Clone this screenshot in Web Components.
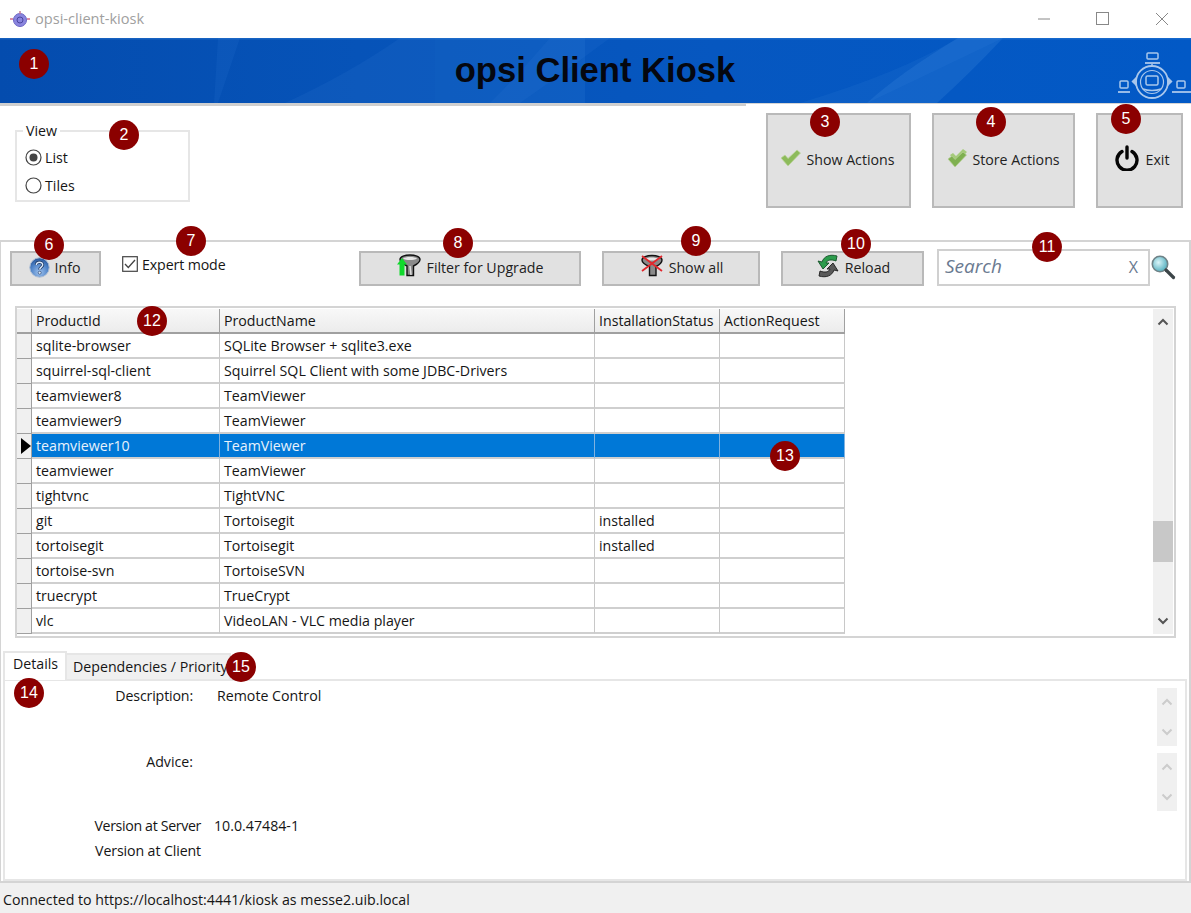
<!DOCTYPE html>
<html><head><meta charset="utf-8"><style>
html,body{margin:0;padding:0;background:#fff}
body{font:14.2px "Open Sans","Noto Sans",sans-serif;color:#151515;width:1191px;height:913px;overflow:hidden;position:relative}
</style></head><body>
<kiosk-app></kiosk-app>
<script>
const ICONS={
check:`<svg width="21" height="19" viewBox="0 0 21 19"><path d="M1 10l4-3 3 3.500L17 2l3.500 3L8 18z" fill="#8dbb5b" stroke="#bcd49c" stroke-width=".8"/></svg>`,
check2:`<svg width="21" height="21" viewBox="0 0 21 21"><path d="M3 8l3-2 3 3 7-7 4 3-11 11z" fill="#a5cb7a"/><path d="M1 12l4-3 3 3.500L16 5l3.500 3L8 20z" fill="#7fb050" stroke="#b6cf95" stroke-width=".7"/></svg>`,
power:`<svg width="26" height="26" viewBox="0 0 26 26"><path d="M8 6.500A10 10 0 1 0 18 6.500" fill="none" stroke="#050505" stroke-width="3.400" stroke-linecap="round"/><path d="M13 2v11" stroke="#050505" stroke-width="3.400" stroke-linecap="round"/></svg>`,
info:`<svg width="21" height="21" viewBox="0 0 21 21" style="position:relative;top:2px"><defs><radialGradient id="q" cx=".5" cy=".75" r=".8"><stop offset="0" stop-color="#9fc2ee"/><stop offset=".6" stop-color="#4a7fc4"/><stop offset="1" stop-color="#1f4a8c"/></radialGradient></defs><circle cx="10.500" cy="10.500" r="9.700" fill="url(#q)" stroke="#a8bbd4"/><path d="M7.300 8c0-3.800 6.600-3.800 6.400 0-.2 2-3 2.300-3 4.500" fill="none" stroke="#16335f" stroke-width="3"/><path d="M7.300 8c0-3.800 6.600-3.800 6.400 0-.2 2-3 2.300-3 4.500" fill="none" stroke="#dbe8f8" stroke-width="1.500"/><circle cx="10.700" cy="15.700" r="1.500" fill="#dbe8f8" stroke="#16335f" stroke-width=".6"/></svg>`,
filterUp:`<svg width="24" height="24" viewBox="0 0 24 24"><path d="M3 5.500C3 2.500 8 1 13 1s10 1.500 10 4.500c0 3-4.500 5.500-6.500 6.500v9.500h-6.500V12C8 11 3 8.500 3 5.500z" fill="#8a8a8a" stroke="#111" stroke-width="1.400"/><path d="M6 4.500c2-2 12-2 14 0-3 2-11 2-14 0z" fill="#e6e6e6"/><path d="M13 12l1 9" stroke="#dedede" stroke-width="1.500"/><path d="M5 4l5 6.500H7.500V21.500H2.500V10.500H0z" fill="#10d92c"/></svg>`,
filterX:`<svg width="24" height="24" viewBox="0 0 24 24"><path d="M2 6c0-3 5-4.500 10-4.500S22 3 22 6c0 3-4 5.500-6 6.500v9H9.500v-9C7 11.500 2 9 2 6z" fill="#8a8a8a" stroke="#111" stroke-width="1.400"/><path d="M5 5c2-2 11-2 14 0-3 2-11 2-14 0z" fill="#e6e6e6"/><path d="M2 2l20 15M22 2L2 17" stroke="#e2262c" stroke-width="1.800"/></svg>`,
reload:`<svg width="26" height="26" viewBox="0 0 26 26"><path d="M22 3C15 1 9 3 7 9L3 8l5 8 6-6h-3c1-3 5-4 10-2z" fill="#2c9c4c" stroke="#134f27" stroke-width=".9"/><path d="M4 23c7 2 13 0 15-6l4 1-5-8-6 6h3c-1 3-5 4-10 2z" fill="#5a5a5a" stroke="#1d1d1d" stroke-width=".9"/></svg>`,
mag:`<svg width="26" height="26" viewBox="0 0 26 26"><defs><radialGradient id="m" cx=".4" cy=".4" r=".7"><stop offset="0" stop-color="#d9f4f8"/><stop offset="1" stop-color="#43a7b8"/></radialGradient></defs><circle cx="10" cy="10" r="7.700" fill="url(#m)" stroke="#6f8287" stroke-width="1.600"/><path d="M16 16l7.500 7.500" stroke="#3c4548" stroke-width="3.200" stroke-linecap="round"/></svg>`,
app:`<svg width="20" height="18" viewBox="0 0 20 18"><circle cx="10" cy="10" r="6.500" fill="#8a85de" stroke="#6a65c5"/><circle cx="10" cy="10" r="3" fill="none" stroke="#4a459f"/><path d="M10 1v3" stroke="#c47a98" stroke-width="1.500"/><path d="M0 9h3M17 9h3" stroke="#dd8fa8" stroke-width="2"/></svg>`,
logo:`<svg width="81" height="66" viewBox="0 0 81 66" fill="none" stroke="#a9c7ec" stroke-width="1.500"><circle cx="42" cy="42" r="16" stroke-width="1.800"/><circle cx="42" cy="42" r="11.500" stroke-width="1.200"/><rect x="36" y="36" width="12" height="9" rx="1.500"/><path d="M33 49c5 2 13 2 18 0"/><rect x="37" y="13" width="11" height="6" rx="1"/><path d="M35 23h15" stroke-width="1.800"/><path d="M42 24v2"/><rect x="10" y="41" width="8" height="7" rx="1"/><path d="M8 52h12" stroke-width="1.800"/><rect x="67" y="41" width="8" height="7" rx="1"/><path d="M62 52h19" stroke-width="1.800"/><path d="M26 38l-3.500 3.500 3.500 3.500z" fill="#a9c7ec"/><path d="M58 38l3.500 3.500-3.500 3.500z" fill="#a9c7ec"/></svg>`,
radioOn:`<svg width="17" height="17" viewBox="0 0 17 17"><circle cx="8.500" cy="8.500" r="7.500" fill="#fff" stroke="#444" stroke-width="1.200"/><circle cx="8.500" cy="8.500" r="4" fill="#444"/></svg>`,
radioOff:`<svg width="17" height="17" viewBox="0 0 17 17"><circle cx="8.500" cy="8.500" r="7.500" fill="#fff" stroke="#444" stroke-width="1.200"/></svg>`,
checkbox:`<svg width="16" height="16" viewBox="0 0 16 16"><rect x=".7" y=".7" width="14.600" height="14.600" fill="#fff" stroke="#444" stroke-width="1.200"/><path d="M3 8l3.300 3.500L13 4" fill="none" stroke="#444" stroke-width="1.300"/></svg>`,
up:c=>`<svg width="12" height="8" viewBox="0 0 12 8"><path d="M1.500 6.500L6 2l4.500 4.500" fill="none" stroke="${c}" stroke-width="2"/></svg>`,
down:c=>`<svg width="12" height="8" viewBox="0 0 12 8"><path d="M1.500 1.500L6 6l4.500-4.500" fill="none" stroke="${c}" stroke-width="2"/></svg>`
};
function def(name,css,html){
  customElements.define(name,class extends HTMLElement{
    constructor(){super();this.attachShadow({mode:'open'});}
    connectedCallback(){
      this.shadowRoot.innerHTML=`<style>${css}</style>`+(typeof html==='function'?html():html);
    }
  });
}
def('kiosk-badge',`:host{position:absolute;width:30px;height:30px;border-radius:50%;background:#8b0000;color:#fff;display:flex;align-items:center;justify-content:center;font:16px "Liberation Sans",sans-serif;z-index:5;transform:translate(-15px,-15px)}`,`<slot></slot>`);
def('kiosk-titlebar',`:host{display:flex;align-items:center;height:38px;padding-left:10px;font-size:14.6px;color:#a0a0a0;box-sizing:border-box}
 .t{margin-left:5px;flex:1;position:relative;top:-1px}.w{display:flex;height:38px}.b{width:59px;display:flex;align-items:center;justify-content:center}`,
 `${ICONS.app}<span class="t">opsi-client-kiosk</span><div class="w"><div class="b"><svg width="14" height="14"><path d="M1 7h12" stroke="#888" stroke-width="1"/></svg></div><div class="b"><svg width="14" height="14"><rect x=".5" y=".5" width="12" height="12" fill="none" stroke="#888"/></svg></div><div class="b"><svg width="14" height="14"><path d="M1 1l12 12M13 1L1 13" stroke="#888" stroke-width="1"/></svg></div></div>`);
def('kiosk-banner',`:host{display:flex;position:relative;height:65px;align-items:center;justify-content:center;background:linear-gradient(90deg,#044cae 0%,#0653b8 30%,#0657c0 60%,#0259c6 100%);overflow:hidden}
 .s{position:absolute;inset:0}.h{margin:0;font:bold 34.6px "Liberation Sans",sans-serif;color:#05070f;position:relative;left:-.5px}.l{position:absolute;right:0;top:2px;display:flex}`,
 `<svg class="s" width="1191" height="65"><path d="M218 0h22l-22 65h-4z" fill="#3a86dc" opacity=".12"/><path d="M285 65Q350 35 400 0h35v65z" fill="#3a86dc" opacity=".13"/><path d="M435 0h150v65H435z" fill="#3a86dc" opacity=".17"/><path d="M520 65Q570 30 610 0h-60Q520 35 490 65z" fill="#3a86dc" opacity=".12"/><path d="M867 65Q930 35 1003 0h-45Q900 35 800 65z" fill="#3a86dc" opacity=".14"/><path d="M937 65Q970 35 1003 0h-45Q900 35 867 65z" fill="#3a86dc" opacity=".28"/><path d="M0 0h1191v1.500H0z" fill="#3a86dc" opacity=".35"/></svg><h1 class="h">opsi Client Kiosk</h1><div class="l">${ICONS.logo}</div>`);
def('kiosk-button',`:host{display:flex;align-items:center;justify-content:center;gap:var(--g,3px);box-sizing:border-box;background:#e1e1e1;border:2px solid #b9b9b9;color:#222;height:var(--h,34px);width:var(--w,100px);flex:none;padding-bottom:2px;padding-right:var(--pr,0);padding-left:var(--pl,0)}
 .i{display:flex}`, `<span class="i"><slot name="i"></slot></span><slot></slot>`);
def('kiosk-view',`:host{display:block;position:relative;box-sizing:border-box;width:175px;height:72px;border:2px solid #e6e6e6;margin:27px 0 0 15px;padding:11px 0 0 8px;flex:none}
 .lg{position:absolute;left:6px;top:-10px;background:#fff;padding:0 3px;line-height:18px}.r{display:flex;align-items:center;gap:3px;height:28px}`,
 `<span class="lg">View</span><div class="r">${ICONS.radioOn}List</div><div class="r">${ICONS.radioOff}Tiles</div>`);
def('kiosk-head',`:host{display:flex;height:137px;box-sizing:border-box;position:relative}
 .line{position:absolute;left:0;top:0;width:746px;height:3px;background:#cfcfcf}.thin{position:absolute;left:0;right:0;top:0;height:1px;background:#d4d4d4}
 .bs{margin-left:auto;display:flex;gap:21px;padding:10px 8px 0 0;align-items:flex-start}`,
 `<div class="thin"></div><div class="line"></div><kiosk-view></kiosk-view><div class="bs">
 <kiosk-button style="--w:145px;--h:95px;--g:5px;--pr:2px"><span slot="i">${ICONS.check}</span>Show Actions</kiosk-button>
 <kiosk-button style="--w:143px;--h:95px;--g:4px"><span slot="i">${ICONS.check2}</span>Store Actions</kiosk-button>
 <kiosk-button style="--w:87px;--h:95px;--g:6px;--pl:4px"><span slot="i">${ICONS.power}</span>Exit</kiosk-button></div>`);
def('kiosk-toolbar',`:host{display:flex;align-items:flex-start;height:64px;box-sizing:border-box;padding:9px 0 0 9px}
 .c{display:flex;align-items:center;gap:4px;margin:1px 0 0 21px;width:237px;height:24px;flex:none;letter-spacing:-.12px}
 .sp{display:flex;gap:21px}
 .s{box-sizing:border-box;width:213px;height:37px;margin:-2px 0 0 13px;border:2px solid #d0d0d0;background:#fff;display:flex;align-items:center;justify-content:space-between;padding:0 10px 3px 6px;color:#6a7a90;font-style:italic;font-size:19px;flex:none}
 .x{font-style:normal;font-size:16px;margin-top:1px}.m{margin:3px 0 0 0;display:flex}`,
 `<kiosk-button style="--w:91px;--h:35px;--g:5px;--pr:2px"><span slot="i">${ICONS.info}</span>Info</kiosk-button>
 <div class="c">${ICONS.checkbox}Expert mode</div>
 <div class="sp"><kiosk-button style="--w:222px;--h:35px;--g:6px"><span slot="i">${ICONS.filterUp}</span>Filter for Upgrade</kiosk-button>
 <kiosk-button style="--w:158px;--h:35px;--g:5px;--pl:1px"><span slot="i">${ICONS.filterX}</span>Show all</kiosk-button>
 <kiosk-button style="--w:143px;--h:35px;--g:4px"><span slot="i">${ICONS.reload}</span>Reload</kiosk-button></div>
 <div class="s"><span>Search</span><span class="x">X</span></div><div class="m">${ICONS.mag}</div>`);
const ROWS=[["sqlite-browser","SQLite Browser + sqlite3.exe",""],["squirrel-sql-client","Squirrel SQL Client with some JDBC-Drivers",""],["teamviewer8","TeamViewer",""],["teamviewer9","TeamViewer",""],["teamviewer10","TeamViewer","",1],["teamviewer","TeamViewer",""],["tightvnc","TightVNC",""],["git","Tortoisegit","installed"],["tortoisegit","Tortoisegit","installed"],["tortoise-svn","TortoiseSVN",""],["truecrypt","TrueCrypt",""],["vlc","VideoLAN - VLC media player",""]];
def('kiosk-table',`:host{display:flex;box-sizing:border-box;margin:0 13px 0 14px;height:332px;border:2px solid #d4d4d4;padding:1px 1px 0 0}
 .g{display:grid;grid-template-columns:15px 188px 375px 125px 125px;grid-auto-rows:25px;align-content:start;width:828px;flex:none}
 .c{box-sizing:border-box;border-right:1px solid #c8c8c8;border-bottom:2px solid #cfcfcf;padding:0 4px;line-height:23px;white-space:nowrap;overflow:hidden;height:25px}
 .h{background:linear-gradient(#f8f8f8,#ececec);border-bottom:2px solid #a0a0a0;border-right:1px solid #a0a0a0;}
 .i{background:#f0f0f0;border-right:1px solid #a0a0a0;border-bottom:1px solid #a0a0a0;padding:0 0 0 4px;display:flex;align-items:center}
 .sel{background:#0078d7;color:#e8f2fc;border-right-color:#7fb2e0;border-bottom-color:#cfcfcf}
 .e{flex:1}.sb{width:20px;background:#f0f0f0;position:relative;display:flex;flex-direction:column;justify-content:space-between;align-items:center;padding:9px 0;box-sizing:border-box;height:325px}
 .th{position:absolute;left:0;top:212px;width:100%;height:41px;background:#c8c8c8}`,
 ()=>`<div class="g"><div class="c h" style="background:#f0f0f0"></div><div class="c h">ProductId</div><div class="c h">ProductName</div><div class="c h">InstallationStatus</div><div class="c h">ActionRequest</div>`+
 ROWS.map(r=>`<div class="c i">${r[3]?'<svg width="10" height="16"><path d="M0 0l10 8-10 8z" fill="#000"/></svg>':''}</div>`+[r[0],r[1],r[2],''].map(t=>`<div class="c${r[3]?' sel':''}">${t}</div>`).join('')).join('')+
 `</div><div class="e"></div><div class="sb">${ICONS.up('#555')}<div class="th"></div>${ICONS.down('#555')}</div>`);
def('kiosk-tabs',`:host{display:block;margin:13px 2px 0 2px;position:relative}
 .ts{display:flex;align-items:flex-end;height:28px}
 .t{box-sizing:border-box;white-space:nowrap}
 .a{width:64px;height:29px;background:#fff;border:2px solid #e6e6e6;border-bottom:0;padding:1px 0 0 8px;z-index:1;margin-bottom:-1px}
 .b{width:164px;height:26px;background:#f0f0f0;border:2px solid #e6e6e6;border-bottom:0;border-left:0;padding:2px 0 0 6px}
 .p{box-sizing:border-box;height:202px;border:2px solid #e6e6e6;position:relative;display:grid;grid-template-columns:1fr 20px;}
 .row{display:flex;box-sizing:border-box}
 .k{text-align:right;flex:none}.v{flex:none}
 .sbs{display:flex;flex-direction:column;gap:7px;padding-top:7px;margin-left:-8px;width:20px}
 .sb{width:20px;height:58px;background:#f0f0f0;display:flex;flex-direction:column;justify-content:space-between;align-items:center;padding:10px 0;box-sizing:border-box}`,
 `<div class="ts"><div class="t a">Details</div><div class="t b">Dependencies / Priority</div></div>
 <div class="p"><div class="rows">
 <div class="row" style="height:65px;padding-top:5px"><span class="k" style="width:188px;letter-spacing:-.15px">Description:</span><span class="v" style="margin-left:24px">Remote Control</span></div>
 <div class="row" style="height:65px;padding-top:6px"><span class="k" style="width:188px">Advice:</span></div>
 <div class="row" style="height:25px;padding-top:5px"><span class="k" style="width:196px;letter-spacing:-.35px">Version at Server</span><span class="v" style="margin-left:13px">10.0.47484-1</span></div>
 <div class="row" style="height:25px;padding-top:5px"><span class="k" style="width:196px;letter-spacing:-.12px">Version at Client</span></div>
 </div><div class="sbs"><div class="sb">${ICONS.up('#ccc')}${ICONS.down('#ccc')}</div><div class="sb">${ICONS.up('#ccc')}${ICONS.down('#ccc')}</div></div></div>`);
def('kiosk-main',`:host{display:block;box-sizing:border-box;height:643px;border:2px solid #d4d4d4;border-width:2px 2px 2px 1px}`,`<slot></slot>`);
def('kiosk-status',`:host{display:flex;align-items:center;height:30px;background:#f0f0f0;padding:2px 0 0 3px;box-sizing:border-box}`,`<slot></slot>`);
def('kiosk-app',`:host{display:flex;flex-direction:column;width:1191px;height:913px;position:relative}`,
 `<kiosk-titlebar></kiosk-titlebar><kiosk-banner></kiosk-banner><kiosk-head></kiosk-head>
 <kiosk-main><kiosk-toolbar></kiosk-toolbar><kiosk-table></kiosk-table><kiosk-tabs></kiosk-tabs></kiosk-main>
 <kiosk-status>Connected to https://localhost:4441/kiosk as messe2.uib.local</kiosk-status>`+
 [[1,34,64],[2,124,135],[3,825,122],[4,991,122],[5,1126,119],[6,49,245],[7,191,241],[8,458,243],[9,696,241],[10,856,244],[11,1047,247],[12,152,321],[13,785,456],[14,29,693],[15,241,667]].map(b=>`<kiosk-badge style="left:${b[1]}px;top:${b[2]}px">${b[0]}</kiosk-badge>`).join(''));
</script>
</body></html>
